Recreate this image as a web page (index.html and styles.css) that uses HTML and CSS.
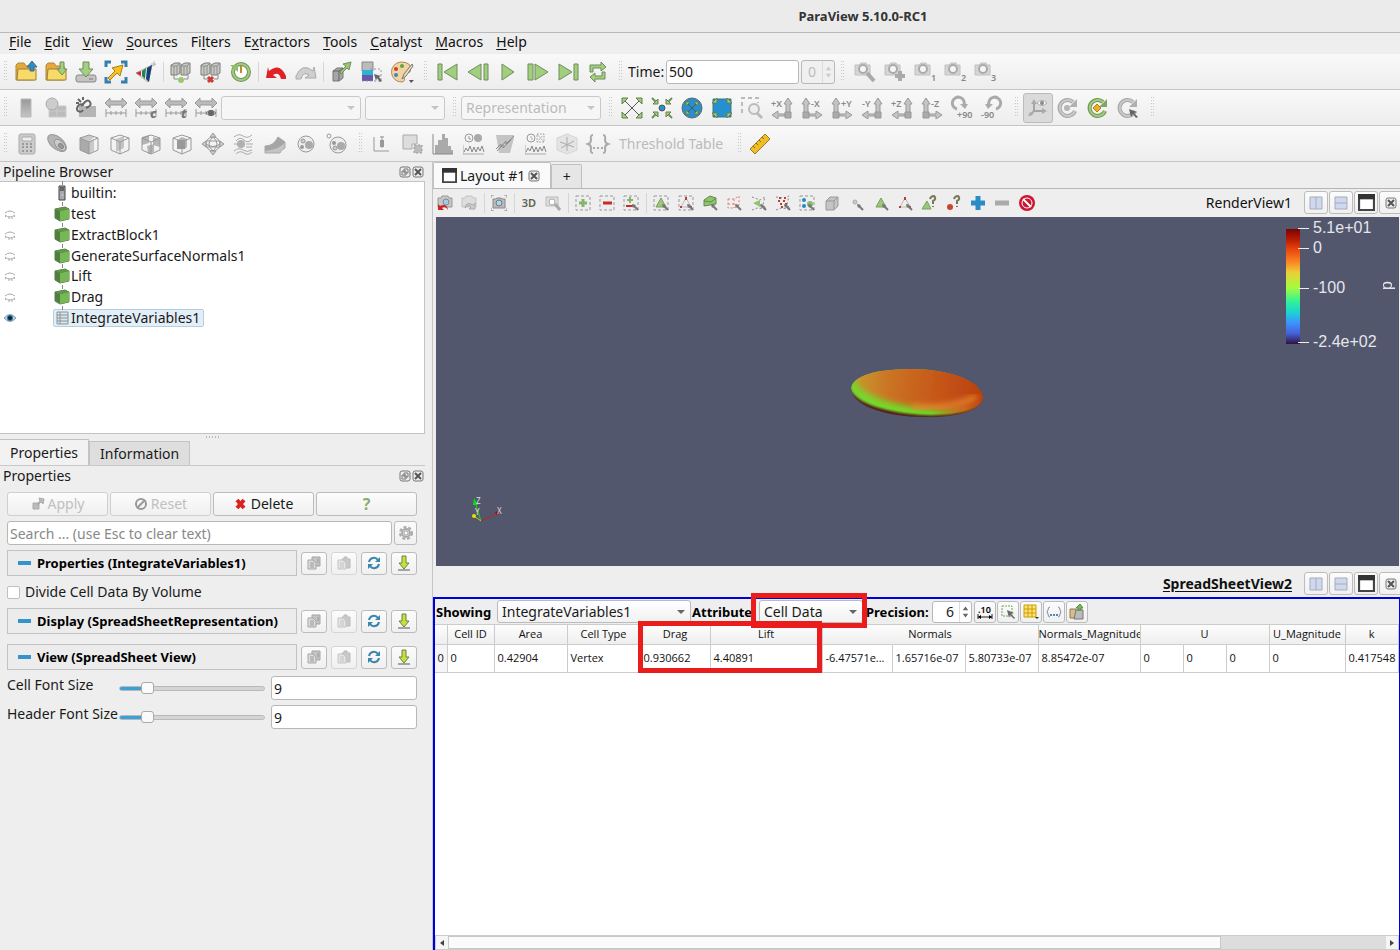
FILE: index.html
```html
<!DOCTYPE html>
<html lang="en">
<head>
<meta charset="utf-8">
<title>ParaView 5.10.0-RC1</title>
<link rel="stylesheet" href="styles.css">
</head>
<body>
<svg class="defs" aria-hidden="true">
  <linearGradient id="gr" x2="0" y2="1"><stop stop-color="#999"/><stop offset="1" stop-color="#c4c4c4"/></linearGradient>
  <symbol id="folder" viewBox="0 0 22 22"><path d="M1 19V4l2-2h6l2 3h8v14z" fill="#e9a83a" stroke="#a98a45"/><path d="M3 8h18v11H2z" fill="#f8da68" stroke="#9b7f3c"/></symbol>
  <symbol id="blocks" viewBox="0 0 22 22"><path d="M1 4l4-2h5v10l-3 2H1zM11 4l4-2h5v10l-3 2h-6z" fill="#c9c9c6" stroke="#7b7b78"/><path d="M1 5h6v9M7 5l3-3M11 5h6v9M17 5l3-3M4 5v9M14 5v9M4 14v4h4M18 14v4h-4" fill="none" stroke="#8d8d8a"/></symbol>
  <symbol id="range" viewBox="0 0 22 22"><path d="M0 6l5-5v3h12V1l5 5-5 5V8H5v3z" fill="#bbb" stroke="#999"/><path d="M1 12v8M21 12v8M1 16h20M6 14v4M11 14v4M16 14v4" fill="none" stroke="#999"/></symbol>
  <symbol id="cube" viewBox="0 0 22 22"><path d="M2 5l9-3 9 3v12l-9 4-9-4zM2 5l9 4 9-4M11 9v12" fill="none" stroke="#999"/></symbol>
  <symbol id="cam" viewBox="0 0 22 22"><path d="M1 4h4l2-2h5l1 2h3v10H1z" fill="#d5d5d5" stroke="#c0c0c0"/><circle cx="9" cy="8" r="4" fill="#f5f5f5" stroke="#aaa" stroke-width="2"/></symbol>
  <symbol id="axr" viewBox="0 0 22 22"><path d="M3 15V7H1l4-6 4 6H7v8M8 17h7v-3l6 4-6 4v-3H8z" fill="#c4c4c4" stroke="#999"/><path d="M2 15h6v6H2z" fill="#aaa" stroke="#999"/></symbol>
  <symbol id="axl" viewBox="0 0 22 22"><path d="M19 15V7h2l-4-6-4 6h2v8M14 17H7v-3l-6 4 6 4v-3h7z" fill="#c4c4c4" stroke="#999"/><path d="M14 15h6v6h-6z" fill="#aaa" stroke="#999"/></symbol>
  <symbol id="green" viewBox="0 0 16 16"><path d="M1 3l10-2 4 2v10l-9 2-5-3z" fill="#4f7f3c" stroke="#5c7a4d"/><path d="M6 5l9-2v10l-9 2z" fill="#76b856"/><path d="M1 3l10-2 4 2-9 2z" fill="#5f9848"/></symbol>
  <symbol id="lidded" viewBox="0 0 12 10"><path d="M1 4q5-4 10 0M1 6q5 4 10 0M2 7L1 8M5 8v2M8 8v2M10 7l1 1" fill="none" stroke="#aaa"/></symbol>
  <symbol id="float" viewBox="0 0 12 12"><rect x="1" y="1" width="10" height="10" rx="2" fill="#eee" stroke="#777"/><path d="M5 3h4v4H5zM3 5h4v4H3z" fill="#eee" stroke="#777"/></symbol>
  <symbol id="close" viewBox="0 0 12 12"><rect x="1" y="1" width="10" height="10" rx="2" fill="#eee" stroke="#777"/><path d="M3 3l6 6M9 3L3 9" stroke="#555" stroke-width="2"/></symbol>
  <symbol id="copy" viewBox="0 0 16 16"><path d="M6 2h8v9H6z" fill="#c4c4c4" stroke="#a5a5a5"/><path d="M2 5h5l3 3v6H2z" fill="#dcdcdc" stroke="#a5a5a5"/><path d="M4 8h4M4 10h4M4 12h4M11 5h2M11 7h2" stroke="#999"/></symbol>
  <symbol id="paste" viewBox="0 0 16 16"><path d="M6 4h2V2h3v2h3v9H6z" fill="#c9c9c9" stroke="#bbb"/><path d="M2 5h5l3 3v6H2z" fill="#e4e4e4" stroke="#c4c4c4"/><path d="M4 8h4M4 10h4M4 12h4" stroke="#c4c4c4"/></symbol>
  <symbol id="refresh" viewBox="0 0 16 16"><path d="M3 7a5 5 0 0 1 9-2M13 9a5 5 0 0 1-9 2" fill="none" stroke="#3c86ad" stroke-width="2"/><path d="M14 2v5H9zM2 14V9h5z" fill="#3c86ad"/></symbol>
  <symbol id="save" viewBox="0 0 16 16"><path d="M6 1h4v7h3l-5 6-5-6h3z" fill="#c3e33c" stroke="#6f8045"/><path d="M2 15h12" stroke="#555"/></symbol>
  <symbol id="splith" viewBox="0 0 14 14"><path d="M1 1h12v12H1zM7 1v12" fill="#cfd8ee" stroke="#a5acb8"/></symbol>
  <symbol id="splitv" viewBox="0 0 14 14"><path d="M1 1h12v12H1zM1 7h12" fill="#cfd8ee" stroke="#a5acb8"/></symbol>
  <symbol id="win" viewBox="0 0 16 16"><path d="M1 1h14v14H1z" fill="#fff" stroke="#444" stroke-width="2"/><path d="M0 0h16v5H0z" fill="#333"/></symbol>
  <symbol id="dash" viewBox="0 0 16 16"><path d="M1 1h14v14H1z" fill="none" stroke="#999" stroke-dasharray="3 2"/></symbol>
  <symbol id="wand" viewBox="0 0 16 16"><path d="M10 10l5 5" stroke="#777" stroke-width="2"/><path d="M9 9l4 1-3 3z" fill="#777"/></symbol>
  <symbol id="tri" viewBox="0 0 16 16"><path d="M8 3l5 9H3z" fill="#99c879" stroke="#7ba05f"/></symbol>
  <symbol id="tridots" viewBox="0 0 16 16"><path d="M8 3l5 9H3z" fill="none" stroke="#bbb"/><path d="M7 2h2v3H7zM2 11h2v2H2zM12 11h2v2h-2z" fill="#b3432e"/></symbol>
  <symbol id="dl" viewBox="0 0 22 22"><path d="M18 14a8 8 0 1 1-2-9" fill="none" stroke="#a5a5a5" stroke-width="4"/><path d="M18 14a8 8 0 1 1-2-9" fill="none" stroke="#c9c9c9" stroke-width="2"/><path d="M20 2v8h-8z" fill="#b0b0b0"/></symbol>
  <symbol id="sq" viewBox="0 0 22 22"><path d="M1 19l2-4 2 3 2-5 2 6 2-5 2 5 2-5 2 4 2-5 2 6" fill="none" stroke="#888"/><path d="M0 12v9h21" fill="none" stroke="#aaa"/></symbol>
</svg>

<header class="titlebar">ParaView 5.10.0-RC1</header>
<nav class="menubar">
  <button><u>F</u>ile</button><button><u>E</u>dit</button><button><u>V</u>iew</button><button><u>S</u>ources</button><button>Fi<u>l</u>ters</button><button>E<u>x</u>tractors</button><button><u>T</u>ools</button><button><u>C</u>atalyst</button><button><u>M</u>acros</button><button><u>H</u>elp</button>
</nav>

<div class="toolbar">
  <i class="grip"></i>
  <button aria-label="Open"><svg viewBox="0 0 22 22"><use href="#folder"/><path d="M15 10V6h-3l5-6 5 6h-3v4z" fill="#348abf" stroke="#39708f"/></svg></button>
  <button aria-label="Load state"><svg viewBox="0 0 22 22"><use href="#folder"/><path d="M15 1h4v7h3l-5 6-5-6h3z" fill="#a3cf80" stroke="#718e59"/></svg></button>
  <button aria-label="Save data"><svg viewBox="0 0 22 22"><rect x="1" y="14" width="20" height="7" rx="2" fill="#c4c4c4" stroke="#888"/><path d="M8 1h6v7h4l-7 8-7-8h4z" fill="#a3cf80" stroke="#718e59"/><path d="M14 18h4" stroke="#777"/></svg></button>
  <button aria-label="Save state"><svg viewBox="0 0 22 22"><path d="M1 6V1h5M16 1h5v5M21 16v5h-5M6 21H1v-5" fill="none" stroke="#3580aa" stroke-width="3"/><path d="M3 17l7-7-3-3 11-3-3 11-3-3-7 7z" fill="#f9c020" stroke="#a67f1c"/></svg></button>
  <button aria-label="Save Catalyst state"><svg viewBox="0 0 22 22"><path d="M1 12l16-8-4 17z" fill="#f1f1f1" stroke="#aaa"/><path d="M1 12l5-2v5z" fill="#d62331"/><path d="M7 10l4-3-1 11-3-3z" fill="#1c8748"/><path d="M12 7l5-3-3 17-3-3z" fill="#143f77"/><path d="M17 5l4-2M19 5V0M16 3h5" stroke="#bbb"/></svg></button>
  <i class="sep"></i>
  <button aria-label="Connect"><svg viewBox="0 0 22 22"><use href="#blocks"/><circle cx="11" cy="19" r="3" fill="#98c871"/></svg></button>
  <button aria-label="Disconnect"><svg viewBox="0 0 22 22"><use href="#blocks"/><path d="M8 16l5 5M13 16l-5 5" stroke="#cf3933" stroke-width="3"/></svg></button>
  <button aria-label="Reset session"><svg viewBox="0 0 22 22"><circle cx="11" cy="11" r="8" fill="#fff" stroke="#719456" stroke-width="4"/><circle cx="11" cy="11" r="8" fill="none" stroke="#a2cd80" stroke-width="2"/><path d="M0 4h8v7z" fill="#92bd70"/><path d="M11 5v7" stroke="#c58a28" stroke-width="2"/></svg></button>
  <i class="sep"></i>
  <button aria-label="Undo"><svg viewBox="0 0 22 22"><path d="M3 6l1 4q11-9 17 5v3h-5q-2-8-8-4l4 3H1z" fill="#e02125"/></svg></button>
  <button aria-label="Redo"><svg viewBox="0 0 22 22"><path d="M19 6l-1 4Q7 1 1 15v3h5q2-8 8-4l-4 3h11z" fill="#cfcfcf" stroke="#aaa"/></svg></button>
  <i class="sep"></i>
  <button aria-label="Auto apply"><svg viewBox="0 0 22 22"><path d="M3 10l4-3h6v10l-4 3H3z" fill="#a6a6a6" stroke="#777"/><path d="M3 10h6v10M9 10l4-3" fill="none" stroke="#666"/><path d="M10 11l6-6-3-2 8-2-2 8-2-2-6 6z" fill="#9bc679" stroke="#718e59"/></svg></button>
  <button aria-label="Find data"><svg viewBox="0 0 22 22"><path d="M2 1h11v9H2z" fill="#bbb" stroke="#888"/><path d="M2 9h11v6H2z" fill="#28b5d7"/><path d="M2 14h11v6H2z" fill="#6a57a5"/><path d="M10 8h11v12H1" fill="none" stroke="#999" stroke-dasharray="2"/><path d="M14 13l7 2-2 1 3 4-2 1-3-4-1 3z" fill="#666"/></svg></button>
  <button class="menu" aria-label="Load palette"><svg viewBox="0 0 22 22"><path d="M10 1a10 10 0 1 0 1 20q4-1 2-5t6-5q3-10-9-10z" fill="#f3d4a1" stroke="#a78b60"/><circle cx="5" cy="8" r="2" fill="#d23c2a"/><circle cx="11" cy="5" r="2" fill="#63a346"/><circle cx="5" cy="14" r="2" fill="#368ac0"/><path d="M21 3l-8 10-2 5 4-3 7-10z" fill="#e8e0ce" stroke="#776"/><path d="M18 19h5l-3 3z" fill="#555"/></svg></button>
  <i class="grip"></i>
  <button aria-label="First frame"><svg class="vcr" viewBox="0 0 22 22"><path d="M1 3h4v16H1zM20 3v16L7 11z"/></svg></button>
  <button aria-label="Previous frame"><svg class="vcr" viewBox="0 0 22 22"><path d="M17 3h4v16h-4zM14 3v16L1 11z"/></svg></button>
  <button aria-label="Play"><svg class="vcr" viewBox="0 0 22 22"><path d="M5 3v16l12-8z"/></svg></button>
  <button aria-label="Next frame"><svg class="vcr" viewBox="0 0 22 22"><path d="M1 3h5v16H1zM8 3v16l13-8z"/></svg></button>
  <button aria-label="Last frame"><svg class="vcr" viewBox="0 0 22 22"><path d="M17 3h4v16h-4zM2 3v16l13-8z"/></svg></button>
  <button aria-label="Loop"><svg class="vcr" viewBox="0 0 22 22"><path d="M3 11V4h11V1l5 5-5 4V7H6v4zM18 11v7H8v3l-5-5 5-4v3h7v-4z"/></svg></button>
  <i class="grip"></i>
  <label class="time-label" for="time">Time:</label>
  <input class="field time" id="time" value="500">
  <span class="spin off"><input type="number" value="0" disabled aria-label="Time step"><svg viewBox="0 0 12 20"><path d="M6 4l3 4H3zM6 16l3-4H3z"/></svg></span>
  <i class="grip"></i>
  <button aria-label="Adjust camera"><svg viewBox="0 0 22 22"><use href="#cam"/><path d="M13 12l7 8" stroke="#aaa" stroke-width="4"/></svg></button>
  <button aria-label="Add camera"><svg viewBox="0 0 22 22"><use href="#cam"/><path d="M16 10v10M11 15h10" stroke="#aaa" stroke-width="4"/></svg></button>
  <button aria-label="Camera 1"><svg viewBox="0 0 22 22"><use href="#cam"/><text x="17" y="20">1</text></svg></button>
  <button aria-label="Camera 2"><svg viewBox="0 0 22 22"><use href="#cam"/><text x="17" y="20">2</text></svg></button>
  <button aria-label="Camera 3"><svg viewBox="0 0 22 22"><use href="#cam"/><text x="17" y="20">3</text></svg></button>
</div>

<div class="toolbar">
  <i class="grip"></i>
  <button aria-label="Color legend"><svg viewBox="0 0 22 22"><path d="M6 2h10v18H6z" fill="url(#gr)" stroke="#bbb"/></svg></button>
  <button aria-label="Edit color map"><svg viewBox="0 0 22 22"><path d="M4 9h17v11H4zM12 9v11M4 14h17" fill="#bbb" stroke="#ccc"/><circle cx="7" cy="7" r="6" fill="#ccc" stroke="#aaa"/></svg></button>
  <button aria-label="Separate color map"><svg viewBox="0 0 22 22"><path d="M4 9h17v11H4z" fill="#b5b5b5"/><path d="M6 9l4-4q3-3 5 0t-2 5l-2 1M9 8q-4-2-6 1t0 5q3 2 5-1M3 2l3 3M8 0v3M1 6h3" fill="none" stroke="#666" stroke-width="2"/></svg></button>
  <button aria-label="Rescale"><svg><use href="#range"/></svg></button>
  <button aria-label="Rescale custom"><svg viewBox="0 0 22 22"><use href="#range"/><text class="b" x="15" y="21">c</text></svg></button>
  <button aria-label="Rescale temporal"><svg viewBox="0 0 22 22"><use href="#range"/><text class="b" x="16" y="21">t</text></svg></button>
  <button aria-label="Rescale visible"><svg viewBox="0 0 22 22"><use href="#range"/><path d="M11 16q5-5 10 0-5 5-10 0z" fill="#ddd" stroke="#777"/><circle cx="16" cy="16" r="3" fill="#666"/></svg></button>
  <span class="combo w140 off"><select disabled aria-label="Coloring"><option></option></select></span>
  <span class="combo w80 off flush"><select disabled aria-label="Component"><option></option></select></span>
  <i class="grip wide"></i>
  <span class="combo w140 off flush"><select disabled aria-label="Representation"><option>Representation</option></select></span>
  <i class="grip wide"></i>
  <button aria-label="Reset camera"><svg viewBox="0 0 22 22"><path d="M4 4l14 14M18 4L4 18" stroke="#555"/><path class="ga" d="M1 1h6L1 7zM21 1v6l-6-6zM1 21v-6l6 6zM21 21h-6l6-6z"/></svg></button>
  <button aria-label="Zoom to data"><svg viewBox="0 0 22 22"><path d="M1 1l5 5M21 1l-5 5M1 21l5-5M21 21l-5-5" stroke="#718e59" stroke-width="2"/><path class="ga" d="M7 2v5H2zM15 2v5h5zM7 20v-5H2zM15 20v-5h5z"/><circle cx="11" cy="11" r="3" fill="#2490d0" stroke="#555"/></svg></button>
  <button aria-label="Reset camera closest"><svg viewBox="0 0 22 22"><circle cx="11" cy="11" r="10" fill="#2490d0" stroke="#666"/><path d="M7 7l8 8M15 7l-8 8" stroke="#555"/><path class="ga" d="M5 5h4l-4 4zM17 5v4l-4-4zM5 17v-4l4 4zM17 17h-4l4-4z"/></svg></button>
  <button aria-label="Zoom closest"><svg viewBox="0 0 22 22"><path d="M2 2h18v18H2z" fill="#2490d0" stroke="#477"/><path class="ga" d="M6 1v5H1zM16 1v5h5zM6 21v-5H1zM16 21v-5h5z"/></svg></button>
  <button aria-label="Zoom to box"><svg viewBox="0 0 22 22"><path d="M1 16V1h16v5" fill="none" stroke="#bbb" stroke-dasharray="4 3" stroke-width="2"/><circle cx="13" cy="12" r="5" fill="#eee" stroke="#bbb" stroke-width="2"/><path d="M16 16l5 5" stroke="#bbb" stroke-width="3"/></svg></button>
  <button aria-label="+X"><svg viewBox="0 0 22 22"><use href="#axl"/><text x="0" y="10">+X</text></svg></button>
  <button aria-label="-X"><svg viewBox="0 0 22 22"><use href="#axr"/><text x="10" y="10">-X</text></svg></button>
  <button aria-label="+Y"><svg viewBox="0 0 22 22"><use href="#axr"/><text x="10" y="10">+Y</text></svg></button>
  <button aria-label="-Y"><svg viewBox="0 0 22 22"><use href="#axl"/><text x="1" y="10">-Y</text></svg></button>
  <button aria-label="+Z"><svg viewBox="0 0 22 22"><use href="#axl"/><text x="0" y="10">+Z</text></svg></button>
  <button aria-label="-Z"><svg viewBox="0 0 22 22"><use href="#axr"/><text x="10" y="10">-Z</text></svg></button>
  <button aria-label="Rotate 90 clockwise"><svg viewBox="0 0 22 22"><path d="M6 12a6 6 0 1 1 7-4" fill="none" stroke="#aaa" stroke-width="3"/><path d="M9 7h8l-3 5z" fill="#aaa"/><text x="6" y="21">+90</text></svg></button>
  <button aria-label="Rotate 90 counterclockwise"><svg viewBox="0 0 22 22"><path d="M15 12a6 6 0 1 0-7-4" fill="none" stroke="#aaa" stroke-width="3"/><path d="M12 7H4l3 5z" fill="#aaa"/><text x="0" y="21">-90</text></svg></button>
  <i class="grip wide"></i>
  <button class="pressed" aria-label="Show orientation axes"><svg viewBox="0 0 22 22"><path d="M3 18l4-4M7 14V6M7 14h9" stroke="#a5a5a5" stroke-width="2"/><path d="M7 2l3 5H4zM20 14l-5-3v6zM1 19l2-4 3 3z" fill="#aaa"/><path d="M10 6q5-5 10 0-5 5-10 0z" fill="#fff" stroke="#aaa"/><circle cx="15" cy="6" r="2" fill="#888"/></svg></button>
  <button aria-label="Show center"><svg viewBox="0 0 22 22"><use href="#dl"/><circle cx="10" cy="11" r="3" fill="#b5b5b5"/></svg></button>
  <button aria-label="Reset center"><svg viewBox="0 0 22 22"><path d="M18 14a8 8 0 1 1-2-9" fill="none" stroke="#719456" stroke-width="4"/><path d="M18 14a8 8 0 1 1-2-9" fill="none" stroke="#9fcc7d" stroke-width="2"/><path d="M20 2v8h-8z" fill="#81a565"/><path d="M10 7l4 4-4 4-4-4z" fill="#e9ae26" stroke="#b57f20"/></svg></button>
  <button aria-label="Pick center"><svg viewBox="0 0 22 22"><use href="#dl"/><path d="M12 12l8 3-3 1 4 4-2 1-3-4-2 3z" fill="#666"/></svg></button>
  <i class="grip wide"></i>
</div>

<div class="toolbar filters">
  <i class="grip"></i>
  <button aria-label="Calculator"><svg viewBox="0 0 22 22"><rect x="3" y="1" width="16" height="20" rx="2" fill="#ccc" stroke="#aaa"/><path d="M6 4h10v4H6z" fill="#eee" stroke="#aaa"/><path d="M6 11h10M6 14h10M6 18h10" stroke="#999" stroke-width="2" stroke-dasharray="2"/></svg></button>
  <button aria-label="Contour"><svg viewBox="0 0 22 22"><ellipse cx="10" cy="10" rx="11" ry="6" transform="rotate(40 10 10)" fill="#b5b5b5" stroke="#999"/><ellipse cx="13" cy="12" rx="7" ry="4" transform="rotate(45 13 12)" fill="#ccc" stroke="#999"/><ellipse cx="14" cy="13" rx="3" ry="2" transform="rotate(45 14 13)" fill="#999" stroke="#888"/></svg></button>
  <button aria-label="Clip"><svg viewBox="0 0 22 22"><path d="M2 5l9 4v12l-9-4z" fill="#aaa"/><path d="M2 5l9-3 5 2-5 5zM11 9l5-3v12l-5 3z" fill="#c9c9c9"/><use href="#cube"/></svg></button>
  <button aria-label="Slice"><svg viewBox="0 0 22 22"><path d="M7 6l8-3v12l-8 4z" fill="#c4c4c4"/><use href="#cube"/></svg></button>
  <button aria-label="Threshold"><svg viewBox="0 0 22 22"><path d="M2 4l7-2v8l-7 2zM13 4l7 2v8l-7-2zM7 13l7-2v8l-6 2z" fill="#b5b5b5"/><use href="#cube"/></svg></button>
  <button aria-label="Extract subset"><svg viewBox="0 0 22 22"><path d="M6 7h8v9H6z" fill="#999"/><path d="M6 7l5-3 5 2v8l-2 2V7z" fill="#b5b5b5"/><use href="#cube"/></svg></button>
  <button aria-label="Glyph"><svg viewBox="0 0 22 22"><circle cx="11" cy="11" r="7" fill="none" stroke="#999"/><path d="M4 11q7 5 14 0M11 4q-8 7 0 14q8-7 0-14M4 8h14M4 14h14" fill="none" stroke="#999"/><path d="M8 4l3-4 3 4zM8 18l3 4 3-4zM4 8v6l-4-3zM18 8v6l4-3z" fill="#ccc" stroke="#999"/></svg></button>
  <button aria-label="Stream tracer"><svg viewBox="0 0 22 22"><path d="M1 4q5-4 9-1t9-1M3 8q4-5 8-1t8-1M1 18q5-4 9-1t9 0M3 21q4-4 8-1t8-1M13 11h7M13 14h6M1 11h4" fill="none" stroke="#aaa"/><circle cx="8" cy="11" r="4" fill="#b0b0b0"/></svg></button>
  <button aria-label="Warp"><svg viewBox="0 0 22 22"><path d="M1 13q9 0 13-9l7 5v6q-5 3-5 5H1z" fill="#c4c4c4" stroke="#aaa"/><path d="M1 13q9 0 13-9l7 5q-4 7-20 9z" fill="#a5a5a5"/></svg></button>
  <button aria-label="Group datasets"><svg viewBox="0 0 22 22"><circle cx="11" cy="11" r="8" fill="#eee" stroke="#999"/><circle cx="8" cy="8" r="2" fill="#ccc" stroke="#999"/><circle cx="7" cy="14" r="2" fill="#999"/><circle cx="14" cy="12" r="4" fill="#aaa"/></svg></button>
  <button aria-label="Extract level"><svg viewBox="0 0 22 22"><circle cx="3" cy="3" r="2" fill="none" stroke="#999"/><circle cx="12" cy="12" r="8" fill="#eee" stroke="#999"/><circle cx="8" cy="10" r="2" fill="#999"/><circle cx="9" cy="15" r="2" fill="#ccc" stroke="#999"/><circle cx="15" cy="13" r="4" fill="#aaa"/></svg></button>
  <i class="grip wide"></i>
  <button aria-label="Plot over line"><svg viewBox="0 0 22 22"><path d="M4 4v14h15M12 3v12M10 4h4" stroke="#999" fill="none"/><path d="M10 7h4v7h-4z" fill="#999"/></svg></button>
  <button aria-label="Extract selection"><svg viewBox="0 0 22 22"><path d="M2 2h14v9h-5v5H2z" fill="#ddd" stroke="#aaa"/><path d="M13 12h8v8h-8z" fill="#bbb" stroke="#999" stroke-dasharray="2"/></svg></button>
  <button aria-label="Histogram"><svg viewBox="0 0 22 22"><path d="M3 21V12h3V7h4V1h3v4h3v8h3v4h2v4z" fill="#aaa"/><path d="M1 1v20h20" stroke="#888" fill="none"/></svg></button>
  <button aria-label="Plot data over time"><svg viewBox="0 0 22 22"><use href="#sq"/><circle cx="6" cy="5" r="4" fill="none" stroke="#999"/><path d="M6 3v3h2" stroke="#999" fill="none"/><circle cx="15" cy="5" r="4" fill="#aaa"/></svg></button>
  <button aria-label="Plot selection"><svg viewBox="0 0 22 22"><path d="M2 2h18v3l-4 15H5z" fill="#c4c4c4"/><path d="M2 16l5-5v3l5-6v3l8-8M3 18l6-6v3l8-8" stroke="#888" fill="none"/></svg></button>
  <button aria-label="Plot temporal"><svg viewBox="0 0 22 22"><use href="#sq"/><circle cx="6" cy="5" r="4" fill="none" stroke="#999"/><path d="M6 3v3h2M12 1h7v8h-7zM12 9l7-8M12 1l7 8" stroke="#aaa" fill="none" stroke-dasharray="2 1"/></svg></button>
  <button aria-label="Probe"><svg viewBox="0 0 22 22"><path d="M1 5l10-4 10 4v12l-10 4-10-4z" fill="#e4e4e4" stroke="#d5d5d5"/><path d="M11 4v14M4 9l14 5M18 8L5 15" stroke="#aaa"/></svg></button>
  <button aria-label="Programmable filter"><svg viewBox="0 0 22 22"><path d="M6 2Q3 2 4 7q0 3-3 4 3 1 3 4-1 5 2 5M16 2q3 0 2 5 0 3 3 4-3 1-3 4 1 5-2 5" stroke="#aaa" stroke-width="2" fill="none"/><path d="M6 15h11" stroke="#aaa" stroke-width="2" stroke-dasharray="2 2"/></svg></button>
  <button class="text-tool" disabled>Threshold Table</button>
  <i class="grip wide"></i>
  <button aria-label="Ruler"><svg viewBox="0 0 22 22"><path d="M1 16L16 1l5 5L6 21z" fill="#f1bd20" stroke="#937c35"/><path d="M4 13l2 2M7 10l2 2M10 7l2 2M13 4l2 2" stroke="#876a20"/></svg></button>
</div>

<main class="work">
  <aside class="left">
    <section class="pipeline">
      <h2 class="dock"><span>Pipeline Browser</span><svg><use href="#float"/></svg><svg><use href="#close"/></svg></h2>
      <ul class="tree">
        <li><span class="eye"></span><span class="node"><svg viewBox="0 0 16 16"><path d="M5 1h6v14H5z" fill="#aaa" stroke="#444"/><path d="M6 3h4M6 5h4" stroke="#222"/><path d="M8 10h1" stroke="#eee"/></svg>builtin:</span></li>
        <li><span class="eye"><svg><use href="#lidded"/></svg></span><span class="node"><svg><use href="#green"/></svg>test</span></li>
        <li><span class="eye"><svg><use href="#lidded"/></svg></span><span class="node"><svg><use href="#green"/></svg>ExtractBlock1</span></li>
        <li><span class="eye"><svg><use href="#lidded"/></svg></span><span class="node"><svg><use href="#green"/></svg>GenerateSurfaceNormals1</span></li>
        <li><span class="eye"><svg><use href="#lidded"/></svg></span><span class="node"><svg><use href="#green"/></svg>Lift</span></li>
        <li><span class="eye"><svg><use href="#lidded"/></svg></span><span class="node"><svg><use href="#green"/></svg>Drag</span></li>
        <li><span class="eye"><svg viewBox="0 0 12 10"><path d="M0 5q6-7 12 0-6 7-12 0z" fill="#b9d6e6" stroke="#999"/><circle cx="6" cy="5" r="3" fill="#1c7bb0"/><circle cx="6" cy="5" r="2" fill="#123"/></svg></span><span class="node selected"><svg viewBox="0 0 16 16"><path d="M3 2h11v12H3z" fill="#dde5ea" stroke="#89929a"/><path d="M3 5h11M3 8h11M3 11h11M6 2v12" stroke="#89929a"/></svg>IntegrateVariables1</span></li>
      </ul>
    </section>
    <i class="splitter"></i>
    <div class="tabs"><button class="tab on">Properties</button><button class="tab">Information</button></div>
    <section class="props">
      <h2 class="dock"><span>Properties</span><svg><use href="#float"/></svg><svg><use href="#close"/></svg></h2>
      <div class="form">
        <div class="actions">
          <button class="btn" disabled><svg viewBox="0 0 14 14"><path d="M2 6h6v6H2zM8 1l5 1-1 5-2-2-3 3-1-1 3-3z" fill="#bbb" stroke="#aaa"/></svg>Apply</button>
          <button class="btn" disabled><svg viewBox="0 0 14 14"><circle cx="7" cy="7" r="5" fill="none" stroke="#999" stroke-width="2"/><path d="M3 11l8-8" stroke="#999" stroke-width="2"/></svg>Reset</button>
          <button class="btn"><svg viewBox="0 0 14 14"><path d="M3 3l7 8M10 3l-7 8" stroke="#d92323" stroke-width="4"/></svg>Delete</button>
          <button class="btn help" aria-label="Help">?</button>
        </div>
        <div class="search">
          <input class="field" placeholder="Search ... (use Esc to clear text)" aria-label="Search properties">
          <button class="btn" aria-label="Advanced"><svg viewBox="0 0 14 14"><circle cx="7" cy="7" r="6" fill="none" stroke="#aaa" stroke-width="2" stroke-dasharray="3 2"/><circle cx="7" cy="7" r="4" fill="#ddd" stroke="#aaa" stroke-width="2"/><circle cx="7" cy="7" r="2" fill="#fff" stroke="#aaa"/></svg></button>
        </div>
        <div class="group"><button class="head"><i></i>Properties (IntegrateVariables1)</button><button class="btn" aria-label="Copy"><svg><use href="#copy"/></svg></button><button class="btn faint" aria-label="Paste"><svg><use href="#paste"/></svg></button><button class="btn" aria-label="Restore defaults"><svg><use href="#refresh"/></svg></button><button class="btn" aria-label="Save defaults"><svg><use href="#save"/></svg></button></div>
        <label class="check"><input type="checkbox">Divide Cell Data By Volume</label>
        <div class="group"><button class="head"><i></i>Display (SpreadSheetRepresentation)</button><button class="btn" aria-label="Copy"><svg><use href="#copy"/></svg></button><button class="btn faint" aria-label="Paste"><svg><use href="#paste"/></svg></button><button class="btn" aria-label="Restore defaults"><svg><use href="#refresh"/></svg></button><button class="btn" aria-label="Save defaults"><svg><use href="#save"/></svg></button></div>
        <div class="group last"><button class="head"><i></i>View (SpreadSheet View)</button><button class="btn" aria-label="Copy"><svg><use href="#copy"/></svg></button><button class="btn faint" aria-label="Paste"><svg><use href="#paste"/></svg></button><button class="btn" aria-label="Restore defaults"><svg><use href="#refresh"/></svg></button><button class="btn" aria-label="Save defaults"><svg><use href="#save"/></svg></button></div>
        <div class="slide"><label for="cf">Cell Font Size</label><input type="range" id="cf" min="1" max="50" value="9"><input class="field" value="9" aria-label="Cell font size value"></div>
        <div class="slide"><label for="hf">Header Font Size</label><input type="range" id="hf" min="1" max="50" value="9"><input class="field" value="9" aria-label="Header font size value"></div>
      </div>
    </section>
  </aside>

  <section class="right">
    <div class="layout-tabs">
      <button class="ltab on"><svg><use href="#win"/></svg>Layout #1<svg class="x"><use href="#close"/></svg></button><button class="ltab plus">+</button>
    </div>
    <div class="view-head">
      <button aria-label="Camera undo"><svg viewBox="0 0 16 16"><path d="M1 3h3l1-2h6l1 2h3v9H1z" fill="#c6c6c6" stroke="#999"/><circle cx="9" cy="7" r="3" fill="#9ccdec" stroke="#888"/><path d="M1 9v6h6l-2-2q3-3 6 2-1-7-8-4z" fill="#cc2424"/></svg></button>
      <button aria-label="Camera redo"><svg viewBox="0 0 16 16"><path d="M1 3h3l1-2h6l1 2h3v9H1z" fill="#ddd" stroke="#c5c5c5"/><path d="M14 8v6H8l2-2q-3-3-6 1 1-7 8-3z" fill="#ccc" stroke="#aaa"/></svg></button>
      <i class="sep"></i>
      <button aria-label="Capture"><svg viewBox="0 0 16 16"><path d="M0 3V0h3M13 0h3v3M16 13v3h-3M3 16H0v-3" fill="none" stroke="#888"/><path d="M2 4h3l1-1h4l1 1h3v9H2z" fill="#bbb" stroke="#888"/><circle cx="8" cy="8" r="3" fill="#abd4ee" stroke="#777"/></svg></button>
      <i class="sep"></i>
      <button class="three">3D</button>
      <button aria-label="Adjust"><svg viewBox="0 0 16 16"><path d="M1 2h12v9H1z" fill="#ddd" stroke="#bbb"/><circle cx="7" cy="7" r="3" fill="#fff" stroke="#aaa"/><path d="M10 9l5 6" stroke="#aaa" stroke-width="3"/></svg></button>
      <i class="sep"></i>
      <button aria-label="Add selection"><svg viewBox="0 0 16 16"><use href="#dash"/><path d="M8 4v8M4 8h8" stroke="#86b567" stroke-width="3"/></svg></button>
      <button aria-label="Subtract selection"><svg viewBox="0 0 16 16"><use href="#dash"/><path d="M4 8h9" stroke="#c92b2b" stroke-width="3"/></svg></button>
      <button aria-label="Toggle selection"><svg viewBox="0 0 16 16"><use href="#dash"/><path d="M7 2v6M4 5h6" stroke="#86b567" stroke-width="2"/><path d="M3 11h7" stroke="#c92b2b" stroke-width="2"/><use href="#wand"/></svg></button>
      <i class="sep"></i>
      <div class="select-tools">
      <button aria-label="Select cells on"><svg viewBox="0 0 16 16"><use href="#dash"/><use href="#tri"/><use href="#wand"/></svg></button>
      <button aria-label="Select points on"><svg viewBox="0 0 16 16"><use href="#dash"/><use href="#tridots"/><use href="#wand"/></svg></button>
      <button aria-label="Select cells through"><svg viewBox="0 0 16 16"><path d="M2 5l6-4 6 2v6l-6 1-6 1z" fill="#8fc36c" stroke="#648a4a"/><path d="M2 6l7 1 5-4" fill="none" stroke="#648a4a"/><use href="#wand"/></svg></button>
      <button aria-label="Select points through"><svg viewBox="0 0 16 16"><path d="M2 4h6l5-3v9l-5 3H2zM8 4v9M2 9h6" fill="none" stroke="#e27b78" stroke-dasharray="2"/><use href="#wand"/></svg></button>
      <button aria-label="Polygon cells"><svg viewBox="0 0 16 16"><path d="M1 2l8 3 5-3-2 7 3 5-9-1-5 2" fill="none" stroke="#888" stroke-dasharray="2"/><path d="M9 5v7L2 8z" fill="#91c26f"/><use href="#wand"/></svg></button>
      <button aria-label="Polygon points"><svg viewBox="0 0 16 16"><path d="M1 2l8 1 5-2-2 8 3 5-9-1-5 2" fill="none" stroke="#888" stroke-dasharray="2"/><path d="M3 6h8M5 9h8M4 3h8M6 12h4" stroke="#b3432e" stroke-width="2" stroke-dasharray="2 3"/><use href="#wand"/></svg></button>
      <button aria-label="Select block"><svg viewBox="0 0 16 16"><use href="#dash"/><circle cx="5" cy="5" r="2" fill="#2688c4"/><circle cx="5" cy="11" r="2" fill="#2688c4"/><circle cx="11" cy="9" r="3" fill="#89bd68"/><use href="#wand"/></svg></button>
      <button aria-label="Select frustum"><svg viewBox="0 0 16 16"><path d="M2 6l4-4h8v9l-4 4H2z" fill="#c4c4c4" stroke="#999"/><path d="M2 6h8v9M10 6l4-4" fill="none" stroke="#999"/></svg></button>
      <button aria-label="Hover point"><svg viewBox="0 0 16 16"><circle cx="7" cy="7" r="2" fill="#ccc" stroke="#aaa"/><use href="#wand"/></svg></button>
      <button aria-label="Hover cell"><svg viewBox="0 0 16 16"><use href="#tri"/><use href="#wand"/></svg></button>
      <button aria-label="Interactive points"><svg viewBox="0 0 16 16"><use href="#tridots"/><use href="#wand"/></svg></button>
      <button aria-label="Query cell"><svg viewBox="0 0 16 16"><path d="M6 6l4 8H1z" fill="#99c879" stroke="#7ba05f"/><path d="M9 4q1-3 4-3 3 3-1 5v3M12 11v1" fill="none" stroke="#777756" stroke-width="2"/></svg></button>
      <button aria-label="Query point"><svg viewBox="0 0 16 16"><circle cx="4" cy="12" r="3" fill="#cc4433"/><path d="M8 4q1-3 4-3 3 3-1 5v3M11 11v1" fill="none" stroke="#777756" stroke-width="2"/></svg></button>
      <button aria-label="Grow selection"><svg viewBox="0 0 16 16"><path d="M8 1v14M1 8h14" stroke="#2a8cc7" stroke-width="5"/></svg></button>
      <button aria-label="Shrink selection"><svg viewBox="0 0 16 16"><path d="M1 8h14" stroke="#aaa" stroke-width="5"/></svg></button>
      <button aria-label="Clear selection"><svg viewBox="0 0 16 16"><circle cx="8" cy="8" r="8" fill="#cc1630"/><circle cx="8" cy="8" r="5" fill="none" stroke="#fff"/><path d="M4 4l8 8" stroke="#fff" stroke-width="2"/></svg></button>
      </div>
      <span class="view-name">RenderView1</span>
      <div class="winbtns"><button class="btn" aria-label="Split horizontal"><svg><use href="#splith"/></svg></button><button class="btn" aria-label="Split vertical"><svg><use href="#splitv"/></svg></button><button class="btn big" aria-label="Maximize"><svg><use href="#win"/></svg></button><button class="btn" aria-label="Close"><svg class="x"><use href="#close"/></svg></button></div>
    </div>

    <div class="render">
      <svg class="disc" viewBox="0 0 136 54">
        <defs>
          <linearGradient id="top" x1="0" y1="0" x2="1" y2="0"><stop stop-color="#c79a2e"/><stop offset=".25" stop-color="#cb7424"/><stop offset=".6" stop-color="#c65718"/><stop offset="1" stop-color="#b83c0c"/></linearGradient>
          <linearGradient id="rim" x1="0" y1="0" x2="1" y2="0"><stop stop-color="#77d52e"/><stop offset=".6" stop-color="#6ce42a"/><stop offset=".85" stop-color="#cc7b23"/><stop offset="1" stop-color="#b83c0c"/></linearGradient>
          <filter id="soft" x="-20%" y="-20%" width="140%" height="140%"><feGaussianBlur stdDeviation="3"/></filter>
          <filter id="edge"><feGaussianBlur stdDeviation="1"/></filter>
          <clipPath id="disc-shape"><path d="M2 21C3 8 29 2 56 2c43-1 75 12 76 28-1 15-34 21-66 19C31 47 3 37 2 21z"/></clipPath>
        </defs>
        <g clip-path="url(#disc-shape)">
          <path d="M0 0h136v54H0z" fill="#551f18"/>
          <path d="M0 18C3 4 29-3 56 0c43-1 78 12 79 30-4 13-32 19-66 17C31 44 3 34 0 18z" fill="url(#rim)" filter="url(#edge)"/>
          <ellipse cx="73" cy="18" rx="68" ry="23" transform="rotate(7 73 18)" fill="url(#top)" filter="url(#soft)"/>
          <path d="M62 39q38 4 64-10" fill="none" stroke="#e98a31" stroke-width="5" filter="url(#soft)"/>
        </g>
      </svg>
      <svg class="axes" viewBox="0 0 40 30"><path d="M13 24L7 5" stroke="#22cf22"/><path d="M5 8l1-7 4 7z" fill="#0be00b"/><path d="M13 24l17-8" stroke="#bd2222"/><path d="M27 15l5-1-3 4z" fill="#900"/><path d="M13 24l-7-5" stroke="#c9c91e"/><circle cx="6" cy="19" r="2" fill="#e8e000"/><text x="8" y="7">Z</text><text x="29" y="17">X</text><text x="7" y="18">Y</text></svg>
      <div class="legend"><i class="ramp"></i><i class="tick t1"></i><i class="tick t2"></i><i class="tick t3"></i><i class="tick t4"></i><span class="t1">5.1e+01</span><span class="t2">0</span><span class="t3">-100</span><span class="t4">-2.4e+02</span><b>p</b></div>
    </div>

    <div class="view-head sheet-head">
      <span class="view-name active">SpreadSheetView2</span>
      <div class="winbtns"><button class="btn" aria-label="Split horizontal"><svg><use href="#splith"/></svg></button><button class="btn" aria-label="Split vertical"><svg><use href="#splitv"/></svg></button><button class="btn big" aria-label="Maximize"><svg><use href="#win"/></svg></button><button class="btn" aria-label="Close"><svg class="x"><use href="#close"/></svg></button></div>
    </div>

    <div class="sheet">
      <div class="sheet-bar">
        <label class="w62" for="showing">Showing</label>
        <span class="combo w194"><select id="showing"><option>IntegrateVariables1</option></select></span>
        <label class="w68" for="attr">Attribute:</label>
        <span class="combo w104"><select id="attr"><option>Cell Data</option></select></span>
        <label class="prec" for="prec">Precision:</label>
        <span class="spin"><input type="number" id="prec" value="6"><svg viewBox="0 0 12 20"><path d="M6 4l3 4H3zM6 16l3-4H3z"/></svg></span>
        <button class="btn" aria-label="Fixed precision"><svg viewBox="0 0 16 16"><text class="ten" x="1" y="9">.10</text><path d="M1 10v5M15 10v5M1 13h14" stroke="#222"/><path d="M1 13l3-2v4zM15 13l-3-2v4z"/></svg></button>
        <button class="btn" aria-label="Selected only"><svg viewBox="0 0 16 16"><path d="M2 2h10v10H2z" fill="none" stroke="#73a857" stroke-dasharray="2 1"/><path d="M7 6l7 3-3 1 4 4-1 1-4-4-1 3z" fill="#666"/></svg></button>
        <button class="btn" aria-label="Columns"><svg viewBox="0 0 16 16"><path d="M1 1h12v12H1zM5 1v12M9 1v12M1 5h12M1 9h12" fill="#ffe17a" stroke="#c9a000"/><path d="M12 13h4l-2 2z" fill="#333"/></svg></button>
        <button class="btn" aria-label="Cell connectivity"><svg viewBox="0 0 16 16"><path d="M4 3Q2 3 2 6L1 8l1 2q0 3 2 3M12 3q2 0 2 3l1 2-1 2q0 3-2 3" fill="none" stroke="#889"/><path d="M4 11h8" stroke="#3b8dc4" stroke-width="2" stroke-dasharray="2 1"/></svg></button>
        <button class="btn" aria-label="Export"><svg viewBox="0 0 16 16"><path d="M1 5h6v9H1z" fill="#d8bd87" stroke="#8d7b58"/><path d="M7 6h7v9H5z" fill="#bbb" stroke="#777"/><path d="M9 6V4H7l4-4 3 4h-2v2z" fill="#77b951" stroke="#5d8448"/></svg></button>
      </div>
      <div class="table-wrap">
      <table>
        <colgroup><col class="c-row"><col class="c-id"><col class="c-73"><col class="c-73"><col class="c-70"><col class="c-112"><col class="c-70"><col class="c-73"><col class="c-73"><col class="c-mag"><col class="c-43"><col class="c-43"><col class="c-43"><col class="c-76"><col></colgroup>
        <thead><tr><th></th><th>Cell ID</th><th>Area</th><th>Cell Type</th><th>Drag</th><th>Lift</th><th colspan="3">Normals</th><th class="tight">Normals_Magnitude</th><th colspan="3">U</th><th>U_Magnitude</th><th>k</th></tr></thead>
        <tbody><tr><th>0</th><td>0</td><td>0.42904</td><td>Vertex</td><td>0.930662</td><td>4.40891</td><td>-6.47571e...</td><td>1.65716e-07</td><td>5.80733e-07</td><td>8.85472e-07</td><td>0</td><td>0</td><td>0</td><td>0</td><td>0.417548</td></tr></tbody>
      </table>
      </div>
      <div class="scroll"><i class="arr l"></i><i class="thumb"></i><i class="rest"></i><i class="arr r"></i></div>
      <i class="mark mark-attr"></i><i class="mark mark-cells"></i>
    </div>
  </section>
</main>
</body>
</html>
```
FILE: styles.css
```css
* { box-sizing: border-box; }
body {
  margin: 0; height: 100vh; display: flex; flex-direction: column; overflow: hidden;
  background: #eee; color: #1a1a1a; font: 14px/20px "Noto Sans", "Open Sans", sans-serif;
}
button, input, select { font: inherit; color: inherit; margin: 0; padding: 0; }
button { border: 0; background: none; white-space: nowrap; }
svg { display: block; flex: none; }
i { display: block; flex: none; }
.defs { position: absolute; width: 0; height: 0; }

.titlebar {
  flex: none; height: 33px; padding-left: 326px; border-bottom: 1px solid #b9b9b9; background: #ebebeb;
  color: #333; font-size: 13px; font-weight: 700; line-height: 32px; text-align: center;
}
.menubar { flex: none; height: 21px; display: flex; align-items: flex-start; gap: 13px; padding-left: 9px; }
.menubar button { color: #111; line-height: 18px; }
.menubar u { text-underline-offset: 2px; }

.toolbar {
  flex: none; height: 36px; display: flex; align-items: center;
  background: linear-gradient(#f9f9f9, #ededed); border-bottom: 1px solid #c6c6c6;
}
.toolbar button { flex: none; width: 30px; height: 30px; display: grid; place-items: center; }
.toolbar .menu { width: 32px; }
.toolbar.filters button { width: 31px; }
.toolbar svg { width: 22px; height: 22px; overflow: visible; }
.toolbar text { font-size: 9px; font-weight: 600; fill: #888; }
.toolbar text.b { font-size: 13px; font-weight: 800; font-style: italic; fill: #777; }
.toolbar .pressed { background: #dadada; border: 1px solid #bbb; border-radius: 3px; }
.grip {
  width: 5px; height: 21px; margin: 0 3px;
  background: conic-gradient(#c9c9c9 25%, transparent 0) 0 0 / 2px 3px;
}
.grip ~ .grip { margin: 0 5px; }
.toolbar .grip.wide { margin: 0 4px 0 7px; }
.toolbar.filters .grip.wide { margin: 0 2px 0 6px; }
.sep { width: 1px; height: 20px; margin: 0 2px; background: #d5d5d5; }
.vcr path { fill: #a0d07e; stroke: #718b5d; }
.ga { fill: #a0d07e; stroke: #65804f; }
.time-label { width: 38px; flex: none; }
.field {
  height: 24px; min-width: 0; padding: 0 2px; border: 1px solid #b8b8b8; border-radius: 3px;
  background: #fff; outline: 0;
}
.field::placeholder { color: #888; opacity: 1; }
.time { width: 133px; margin-right: 2px; }
.spin {
  flex: none; width: 34px; height: 24px; display: flex; border: 1px solid #b8b8b8; border-radius: 3px; background: #fff;
}
.spin input { width: 18px; flex: 1; border: 0; background: none; text-align: center; appearance: textfield; }
.spin input::-webkit-inner-spin-button { display: none; }
.spin svg, .toolbar .spin svg { width: 12px; height: 22px; border-left: 1px solid #ddd; fill: #666; }
.spin.off { background: #f0f0f0; color: #bbb; }
.spin.off svg { fill: #ccc; }

.combo { position: relative; flex: none; height: 24px; margin-right: 4px; }
.combo select {
  width: 100%; height: 100%; padding: 0 4px; appearance: none; border: 1px solid #bbb; border-radius: 3px;
  background: linear-gradient(#fff, #f1f1f1); opacity: 1;
}
.combo::after {
  content: ""; position: absolute; right: 6px; top: 10px; border: 4px solid transparent;
  border-top-color: #666; border-bottom: 0;
}
.combo.off select { color: #bbb; border-color: #c9c9c9; background: #f6f6f6; }
.combo.off::after { border-top-color: #c4c4c4; }
.combo.flush { margin-right: 0; }
.w140 { width: 140px; } .w80 { width: 80px; } .w194 { width: 194px; } .w104 { width: 104px; }
.w62 { width: 62px; } .w68 { width: 68px; }
.toolbar.filters .text-tool { width: auto; padding: 0 8px 0 6px; color: #bbb; }

.work { flex: 1; min-height: 0; display: flex; }
.left { flex: none; width: 433px; padding-right: 7px; border-right: 1px solid #c5c5c5; }
.dock { height: 20px; margin: 0; padding: 0 1px 0 3px; display: flex; align-items: center; gap: 1px; font: inherit; }
.dock span { flex: 1; }
.dock svg { width: 12px; height: 12px; }
.pipeline .dock { height: 19px; }
.tree {
  height: 253px; margin: 0; padding: 1px 0; list-style: none; background: #fff; border: 1px solid #c3c3c3; border-left: 0;
}
.tree li { height: 20px; margin-bottom: 1px; display: flex; align-items: center; }
.tree li:nth-child(4n) { margin-bottom: 0; }
.eye { width: 53px; padding-left: 4px; }
.eye svg { width: 12px; height: 10px; }
.node { height: 18px; display: flex; align-items: center; gap: 1px; padding-right: 3px; border: 1px solid transparent; line-height: 16px; position: relative; }
.node svg { width: 16px; height: 16px; }
.node::before { content: ""; position: absolute; left: 8px; top: -4px; height: 4px; border-left: 1px solid #888; }
.selected { background: #e3eff8; border-color: #b5cfdf; border-radius: 2px; }
.splitter { width: 14px; height: 2px; margin: 2px auto; background: repeating-linear-gradient(90deg, #bbb 0 1px, transparent 1px 3px); }
.tabs { height: 26px; display: flex; align-items: flex-end; border-bottom: 1px solid #c8c8c8; }
.tab { height: 24px; padding: 0 10px; border: 1px solid #c3c3c3; border-bottom: 0; background: #dedede; }
.tab.on { height: 26px; border-left: 0; background: #f2f2f2; }

.form { padding: 6px 8px 0 7px; }
.btn {
  display: flex; align-items: center; justify-content: center; gap: 3px; height: 24px;
  border: 1px solid #bcbcbc; border-radius: 3px; background: linear-gradient(#fcfcfc, #f0f0f0);
}
.btn:disabled { color: #c0c0c0; border-color: #cfcfcf; }
.btn svg { width: 14px; height: 14px; }
.actions { display: grid; grid-template-columns: repeat(4, 1fr); gap: 2px; }
.help { color: #86b06b; font-size: 16px; font-weight: 700; }
.search { display: flex; gap: 2px; margin: 5px 0; }
.search .field { flex: 1; }
.search .btn { width: 23px; }
.group { display: flex; align-items: center; gap: 4px; }
.group .head {
  flex: 1; min-width: 0; height: 26px; display: flex; align-items: center; gap: 6px; padding-left: 10px;
  border: 1px solid #c2c2c2; background: #ececec; color: #000; font-size: 13px; font-weight: 700;
}
.head i { width: 13px; height: 4px; background: #3494ca; }
.group .btn { width: 26px; height: 23px; }
.group .btn svg { width: 16px; height: 16px; }
.faint { border-color: #d5d5d5; }
.check { display: flex; align-items: center; gap: 5px; height: 32px; }
.check input { width: 13px; height: 13px; appearance: none; border: 1px solid #c0c0c0; border-radius: 2px; background: #fff; }
.last { margin: 10px 0 5px; }
.slide { display: grid; grid-template-columns: 112px 146px 1fr; align-items: center; margin-bottom: 3px; white-space: nowrap; }
.slide label { padding-bottom: 6px; }
.slide .field { margin-left: 6px; }
.slide input[type=range] { appearance: none; width: 146px; height: 14px; background: none; }
.slide input[type=range]::-webkit-slider-runnable-track { height: 5px; border: 1px solid #b9b9b9; border-radius: 3px; background: linear-gradient(90deg, #3b9fda 20%, #d4d4d4 20%); }
.slide input[type=range]::-webkit-slider-thumb { appearance: none; width: 13px; height: 12px; margin-top: -5px; border: 1px solid #aaa; border-radius: 3px; background: #fafafa; }

.right { flex: 1; min-width: 0; display: flex; flex-direction: column; }
.layout-tabs { flex: none; height: 27px; display: flex; align-items: flex-end; border-bottom: 1px solid #b5b5b5; }
.ltab { display: flex; align-items: center; gap: 3px; height: 26px; padding: 0 10px 0 8px; border: 1px solid #c0c0c0; border-bottom: 0; background: #fafafa; border-radius: 2px 2px 0 0; }
.ltab svg { width: 15px; height: 15px; }
.ltab .x { width: 12px; height: 12px; }
.plus { width: 31px; height: 24px; padding: 0; justify-content: center; background: #e6e6e6; }
.view-head { flex: none; height: 27px; display: flex; align-items: center; overflow: hidden; }
.view-head > button, .select-tools button { flex: none; width: 24px; height: 24px; display: grid; place-items: center; }
.view-head svg { width: 16px; height: 16px; }
.view-head .sep { margin: 0 2px 0 3px; }
.select-tools { flex: 0 1 390px; display: flex; }
.select-tools button { flex: 1; }
.view-head .three { font-size: 11px; font-weight: 600; color: #5c6350; }
.view-name { margin-left: auto; color: #111; }
.view-name.active { font-weight: 700; text-decoration: underline; text-underline-offset: 2px; }
.winbtns { display: flex; gap: 1px; margin: 0 -3px 0 12px; }
.winbtns .btn { width: 24px; height: 23px; }
.winbtns svg { width: 14px; height: 14px; }
.winbtns .big svg { width: 17px; height: 17px; }
.winbtns .x { width: 12px; height: 12px; }

.render { flex: 350 1 0; min-height: 0; position: relative; margin: 1px 1px 0 3px; display: grid; place-items: center; background: #52576e; overflow: hidden; }
.disc { width: 138px; height: 55px; margin-top: 6px; }
.axes { position: absolute; left: 32px; bottom: 39px; width: 40px; height: 30px; }
.axes text { font-size: 8px; fill: #ddd; }
.legend { position: absolute; top: 0; right: 0; width: 114px; height: 140px; font: 16px/20px "Liberation Sans", Arial, sans-serif; color: #e6e6ea; }
.legend .ramp {
  position: absolute; left: 1px; top: 12px; width: 14px; height: 115px;
  background: linear-gradient(#7a0403, #b81a02 9%, #e8470c 18%, #fb8022 28%, #eacf38 38%, #a4fc3c 51%, #32f197 63%, #1bd0d5 73%, #4090fe 82%, #4560d6 91%, #30123b);
}
.legend .tick { position: absolute; left: 13px; width: 11px; height: 1px; margin-top: 10px; background: #eee; }
.legend span { position: absolute; left: 28px; }
.legend .t1 { top: 1px; } .legend .t2 { top: 21px; } .legend .t3 { top: 61px; } .legend .t4 { top: 115px; }
.legend b { position: absolute; right: 2px; top: 64px; font-weight: 400; writing-mode: vertical-rl; transform: rotate(180deg); }

.sheet-head { margin-top: 4px; }
.sheet { flex: 352 1 0; min-height: 0; position: relative; display: flex; flex-direction: column; border: 2px solid #0000dc; border-bottom: 0; border-right-width: 1px; background: #fff; }
.sheet-bar { flex: none; height: 26px; display: flex; align-items: center; background: #eee; border-bottom: 1px solid #ccc; }
.sheet-bar label { flex: none; padding-left: 1px; font-weight: 700; font-size: 13px; color: #000; white-space: nowrap; }
.sheet-bar .prec { width: 69px; padding-left: 3px; }
.sheet-bar .combo { margin: 0; height: 23px; }
.sheet-bar .combo::after { border-width: 4px 4px 0; }
.sheet-bar .spin { width: 40px; height: 22px; margin-right: 1px; }
.sheet-bar .spin svg { height: 20px; }
.sheet-bar .spin input { text-align: right; padding-right: 5px; }
.sheet-bar .btn { flex: none; width: 22px; height: 22px; margin-left: 1px; }
.sheet-bar .btn svg { width: 16px; height: 16px; }
.ten { font-size: 9px; font-weight: 600; }
.table-wrap { flex: 1; min-height: 0; overflow: hidden; }
table { width: 100%; table-layout: fixed; border-collapse: collapse; font: 11px/16px "Open Sans", "Noto Sans", sans-serif; color: #111; }
th, td { padding: 0 2px; border-right: 1px solid #ccc; border-bottom: 1px solid #ccc; white-space: nowrap; overflow: hidden; font-weight: 400; }
td { text-align: left; height: 28px; padding: 0 0 0 3px; }
thead th { height: 19px; background: linear-gradient(#fdfdfd, #eee); }
thead .tight { padding: 0; }
tbody th { padding: 0; background: #f5f5f5; }
.c-row { width: 12px; } .c-id { width: 47px; } .c-73 { width: 73px; } .c-70 { width: 70px; } .c-112 { width: 112px; }
.c-mag { width: 102px; } .c-43 { width: 43px; } .c-76 { width: 76px; }
.scroll { flex: none; height: 15px; display: flex; align-items: center; background: #f5f5f5; border: 1px solid #ccc; }
.thumb { flex: 770 1 0; height: 13px; background: #fbfbfb; border: 1px solid #c8c8c8; }
.rest { flex: 165 1 0; height: 13px; background: #ddd; }
.arr { width: 12px; display: grid; place-items: center; }
.arr::after { content: ""; border: 3px solid transparent; }
.arr.l::after { border-right: 4px solid #444; border-left: 0; }
.arr.r::after { border-left: 4px solid #444; border-right: 0; }
.mark { position: absolute; border: 5px solid #ea1c1c; }
.mark-attr { left: 316px; top: -6px; width: 116px; height: 35px; }
.mark-cells { left: 203px; top: 22px; width: 184px; height: 52px; }
```
